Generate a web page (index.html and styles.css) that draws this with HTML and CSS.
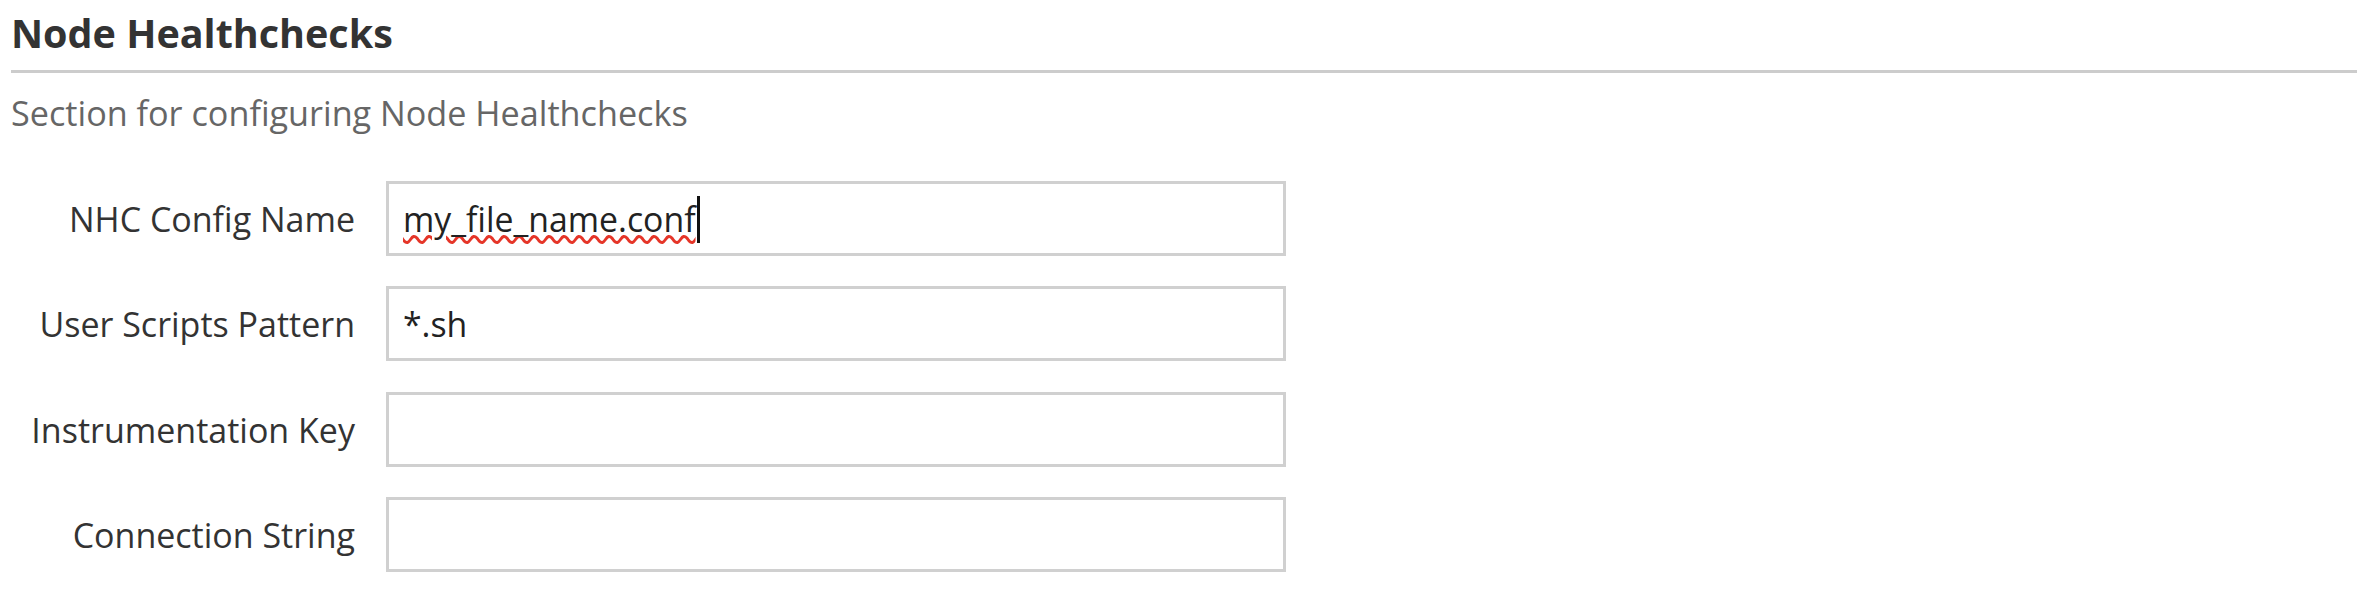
FILE: index.html
```html
<!DOCTYPE html>
<html lang="en">
<head>
<meta charset="utf-8">
<title>Node Healthchecks</title>
<link rel="stylesheet" href="styles.css">
</head>
<body>
<main class="section">
  <h2 class="section-title">Node Healthchecks</h2>
  <p class="section-desc">Section for configuring Node Healthchecks</p>
  <form class="form">
    <div class="row">
      <label class="label">NHC Config Name</label>
      <div class="input" role="textbox"><span class="spell">my_file_name.conf</span><span class="caret"></span></div>
    </div>
    <div class="row">
      <label class="label">User Scripts Pattern</label>
      <div class="input" role="textbox">*.sh</div>
    </div>
    <div class="row">
      <label class="label">Instrumentation Key</label>
      <div class="input" role="textbox"></div>
    </div>
    <div class="row">
      <label class="label">Connection String</label>
      <div class="input" role="textbox"></div>
    </div>
  </form>
</main>
</body>
</html>
```

FILE: styles.css
```css
html, body {
  margin: 0;
  padding: 0;
  background: #ffffff;
}

body {
  font-family: "Open Sans", "Noto Sans", sans-serif;
  color: #333333;
}

.section {
  padding: 5px 4px 0 11px;
}

.section-title {
  margin: 0;
  font-size: 39.5px;
  line-height: 56px;
  font-weight: 700;
  color: #333333;
  padding-bottom: 9px;
  border-bottom: 3px solid #cccccc;
}

.section-desc {
  margin: 16px 0 0;
  font-size: 34.2px;
  line-height: 48px;
  color: #666666;
}

.form {
  margin-top: 44px;
  display: grid;
  grid-template-columns: 344px 900px;
  grid-auto-rows: 75px;
  column-gap: 31px;
  row-gap: 30.33px;
}

.row {
  display: contents;
}

.label {
  box-sizing: border-box;
  height: 75px;
  padding-top: 2px;
  font-size: 34px;
  line-height: 73px;
  text-align: right;
  color: #333333;
  white-space: nowrap;
}

.input {
  box-sizing: border-box;
  height: 75px;
  border: 3px solid #d0d0d0;
  padding: 2px 14px 0;
  font-size: 33.8px;
  line-height: 67px;
  color: #222222;
  display: flex;
  align-items: center;
  background: #ffffff;
}

.spell {
  text-decoration-line: underline;
  text-decoration-style: wavy;
  text-decoration-color: #e53528;
  text-decoration-thickness: 3px;
  text-underline-offset: 3px;
}

.caret {
  display: inline-block;
  width: 3px;
  height: 47px;
  background: #111111;
  margin-left: 1px;
}
```
